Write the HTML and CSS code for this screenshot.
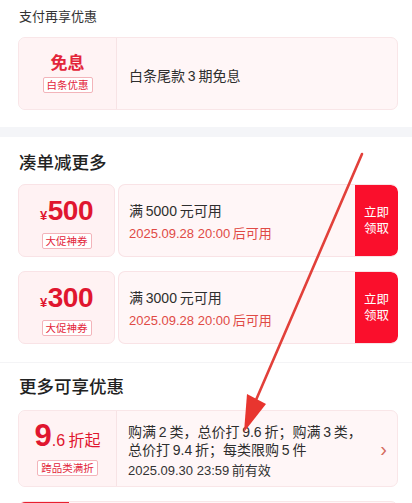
FILE: index.html
```html
<!DOCTYPE html>
<html lang="zh">
<head>
<meta charset="utf-8">
<link rel="stylesheet" href="styles.css">
</head>
<body>
<div class="page">
  <section class="block first">
    <div class="title-sm">支付再享优惠</div>
    <div class="card plain">
      <div class="left">
        <div class="big-word">免息</div>
        <div class="tag">白条优惠</div>
      </div>
      <div class="right single">白条尾款&#8201;3&#8201;期免息</div>
    </div>
  </section>
  <section class="block second">
    <div class="title">凑单减更多</div>
    <div class="coupon">
      <div class="cleft">
        <div class="amount"><span class="yen">¥</span>500</div>
        <div class="tag">大促神券</div>
      </div>
      <div class="cright">
        <div class="info">
          <div class="cond">满&#8201;5000&#8201;元可用</div>
          <div class="time">2025.09.28 20:00&#8201;后可用</div>
        </div>
        <div class="btn">立即<br>领取</div>
      </div>
    </div>
    <div class="coupon">
      <div class="cleft">
        <div class="amount"><span class="yen">¥</span>300</div>
        <div class="tag">大促神券</div>
      </div>
      <div class="cright">
        <div class="info">
          <div class="cond">满&#8201;3000&#8201;元可用</div>
          <div class="time">2025.09.28 20:00&#8201;后可用</div>
        </div>
        <div class="btn">立即<br>领取</div>
      </div>
    </div>
    <div class="divider"></div>
    <div class="title">更多可享优惠</div>
    <div class="card plain tall">
      <div class="left">
        <div class="disc"><span class="d-big">9</span><span class="d-small">.6&#8201;折起</span></div>
        <div class="tag">跨品类满折</div>
      </div>
      <div class="right multi">
        <div class="desc">购满&#8201;2&#8201;类，总价打&#8201;9.6&#8201;折；购满&#8201;3&#8201;类，<br>总价打&#8201;9.4&#8201;折；每类限购&#8201;5&#8201;件</div>
        <div class="valid">2025.09.30 23:59&#8201;前有效</div>
      </div>
      <div class="chev">›</div>
    </div>
    <div class="card peek">
      <div class="peek-tag"></div>
    </div>
  </section>
  <svg class="arrow" width="412" height="503" viewBox="0 0 412 503">
    <path d="M362 154 L256 400" stroke="#e2403a" stroke-width="2.6" stroke-linecap="round" fill="none"/>
    <path d="M244 432 L247 394 L266 404 Z" fill="#e8352f"/>
  </svg>
</div>
</body>
</html>
```
FILE: styles.css
```css
* { box-sizing: border-box; }
html, body { margin: 0; padding: 0; }
body {
  width: 412px;
  height: 503px;
  overflow: hidden;
  background: #f4f5f8;
  font-family: "Liberation Sans", "Noto Sans CJK SC", sans-serif;
  color: #2b2b2b;
}
.page { position: relative; width: 412px; height: 503px; overflow: hidden; }
.block { background: #fff; padding: 0 14px 0 18px; }
.first { height: 127px; padding-top: 8px; }
.second { margin-top: 10px; padding-top: 15px; height: 366px; overflow: hidden; }
.title-sm { font-size: 13px; line-height: 18px; height: 18px; color: #333; margin-left: 1px; }
.title { font-size: 17.5px; line-height: 22px; color: #222; font-weight: 500; margin-left: 1px; }

.card {
  display: flex;
  background: #fff6f7;
  border: 1px solid #f9e6e8;
  border-radius: 7px;
}
.first .card { margin-top: 11px; height: 73px; }
.left {
  width: 98px;
  flex: none;
  border-right: 1px solid #f7e3e5;
  display: flex;
  flex-direction: column;
  align-items: center;
  justify-content: center;
  background: #fff3f4;
  border-radius: 7px 0 0 7px;
}
.big-word { font-size: 17px; line-height: 20px; font-weight: 700; color: #e3263a; }
.tag {
  margin-top: 3px;
  font-size: 10.5px;
  line-height: 14px;
  padding: 0 3px;
  color: #e3263a;
  border: 1px solid #f3b4ba;
  border-radius: 2px;
  background: #fff;
}
.right { flex: 1; padding-left: 12px; }
.single { display: flex; align-items: center; font-size: 14px; color: #2e2e2e; padding-top: 2px; }

.coupon { display: flex; height: 73px; margin-top: 10px; gap: 3px; }
.coupon + .coupon { margin-top: 14px; }
.cleft {
  width: 97px;
  flex: none;
  background: #fff2f3;
  border: 1px solid #f9e3e6;
  border-radius: 7px;
  display: flex;
  flex-direction: column;
  align-items: center;
  justify-content: center;
  padding-top: 4px;
}
.amount { font-size: 28px; line-height: 30px; font-weight: 700; color: #e0162f; letter-spacing: -0.5px; }
.yen { font-size: 13px; font-weight: 700; margin-right: 1px; }
.cleft .tag { margin-top: 2px; }
.cright {
  flex: 1;
  display: flex;
  background: #fff6f7;
  border: 1px solid #f9e3e6;
  border-right: none;
  border-radius: 7px;
  overflow: hidden;
}
.info { flex: 1; padding-left: 10px; display: flex; flex-direction: column; justify-content: center; padding-top: 2px; }
.cond { font-size: 14px; line-height: 20px; color: #2e2e2e; }
.time { font-size: 13px; line-height: 18px; color: #e04a45; margin-top: 4px; }
.btn {
  width: 43px;
  flex: none;
  background: #fa0f2c;
  color: #fff;
  font-size: 12.5px;
  line-height: 16px;
  display: flex;
  align-items: center;
  justify-content: center;
  text-align: center;
  border-radius: 0 7px 7px 0;
}
.divider { height: 1px; background: #f4f4f6; margin: 18px -14px 13px -18px; }

.tall { margin-top: 12px; height: 77px; position: relative; }
.disc { color: #e0162f; line-height: 30px; }
.d-big { font-size: 31px; font-weight: 700; }
.d-small { font-size: 16px; }
.tall .tag { margin-top: 4px; }
.multi { padding: 12px 24px 0 11px; }
.desc { font-size: 14px; line-height: 18px; color: #2e2e2e; white-space: nowrap; }
.valid { font-size: 13px; line-height: 18px; color: #333; margin-top: 3px; }
.chev { position: absolute; right: 10px; top: 28px; color: #d46a5e; font-size: 20px; line-height: 20px; }

.peek { margin-top: 14px; height: 20px; position: relative; overflow: hidden; }
.peek-tag { width: 50px; height: 4px; background: #e8202f; border-radius: 7px 0 0 0; }

.arrow { position: absolute; left: 0; top: 0; pointer-events: none; }
```
